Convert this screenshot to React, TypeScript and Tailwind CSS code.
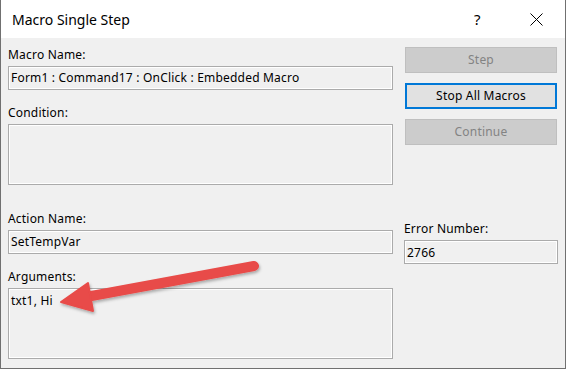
import React from "react";

const font = { fontFamily: '"Noto Sans", "Segoe UI", sans-serif' };

function Label({ children, className = "" }: { children: React.ReactNode; className?: string }) {
  return <div className={`h-[16px] leading-[16px] text-[12px] tracking-[0.2px] text-black mb-[3px] ${className}`}>{children}</div>;
}

function Box({ h, children, top = false, className = "" }: { h: string; children?: React.ReactNode; top?: boolean; className?: string }) {
  return (
    <div
      className={`${h} border border-[#ababab] bg-[#f0f0f0] shadow-[inset_0_0_0_1px_#ffffff] px-[2px] text-[12px] tracking-[0.2px] text-black flex ${top ? "items-start pt-[3px]" : "items-center"} ${className}`}
    >
      {children}
    </div>
  );
}

export default function App() {
  return (
    <div className="relative w-[566px] h-[369px] bg-[#f0f0f0] border border-t-0 border-[#707070] overflow-hidden" style={font}>
      {/* title bar */}
      <div className="h-[38px] bg-white flex items-center pl-[11px] pr-[22px]">
        <div className="text-[14px] text-black leading-none flex-1 pt-[1px]">Macro Single Step</div>
        <div className="text-[15px] text-black w-[12px] leading-none mr-[44px] pt-[1px]">?</div>
        <svg width="13" height="13" viewBox="0 0 13 13" className="mt-[1px]">
          <path d="M0.5 0.5 L12.5 12.5 M12.5 0.5 L0.5 12.5" stroke="#000" strokeWidth="1" />
        </svg>
      </div>
      {/* body */}
      <div className="flex pl-[7px] pt-[9px]">
        <div className="w-[385px] flex flex-col">
          <Label>Macro Name:</Label>
          <Box h="h-[24px]">Form1 : Command17 : OnClick : Embedded Macro</Box>
          <Label className="mt-[15px]">Condition:</Label>
          <Box h="h-[61px]" top />
          <Label className="mt-[26px]">Action Name:</Label>
          <Box h="h-[24px]">SetTempVar</Box>
          <Label className="mt-[15px]">Arguments:</Label>
          <Box h="h-[71px]" top>txt1, Hi</Box>
        </div>
        <div className="ml-[11px] w-[154px] flex flex-col">
          <div className="ml-[1px] w-[152px] h-[26px] bg-[#cccccc] border border-[#bfbfbf] text-[12px] tracking-[0.2px] text-[#838383] flex items-center justify-center">Step</div>
          <div className="ml-[1px] mt-[10px] w-[152px] h-[26px] bg-[#e1e1e1] border-2 border-[#0078d7] text-[12px] tracking-[0.2px] text-black flex items-center justify-center">Stop All Macros</div>
          <div className="ml-[1px] mt-[10px] w-[152px] h-[26px] bg-[#cccccc] border border-[#bfbfbf] text-[12px] tracking-[0.2px] text-[#838383] flex items-center justify-center">Continue</div>
          <Label className="mt-[76px]">Error Number:</Label>
          <Box h="h-[24px]" top className="pt-[1px]">2766</Box>
        </div>
      </div>
      {/* arrow annotation */}
      <svg className="absolute left-0 top-0 pointer-events-none" width="566" height="369" viewBox="0 0 566 369">
        <defs>
          <filter id="sh" x="-10%" y="-30%" width="120%" height="160%">
            <feDropShadow dx="1" dy="2" stdDeviation="1.5" floodColor="#000" floodOpacity="0.3" />
          </filter>
        </defs>
        <g filter="url(#sh)" fill="#e84b48" stroke="#e84b48">
          <line x1="253" y1="266" x2="85" y2="297" strokeWidth="10" strokeLinecap="round" />
          <polygon points="60,302 87,283 92,311" strokeWidth="2" strokeLinejoin="round" />
        </g>
      </svg>
    </div>
  );
}
